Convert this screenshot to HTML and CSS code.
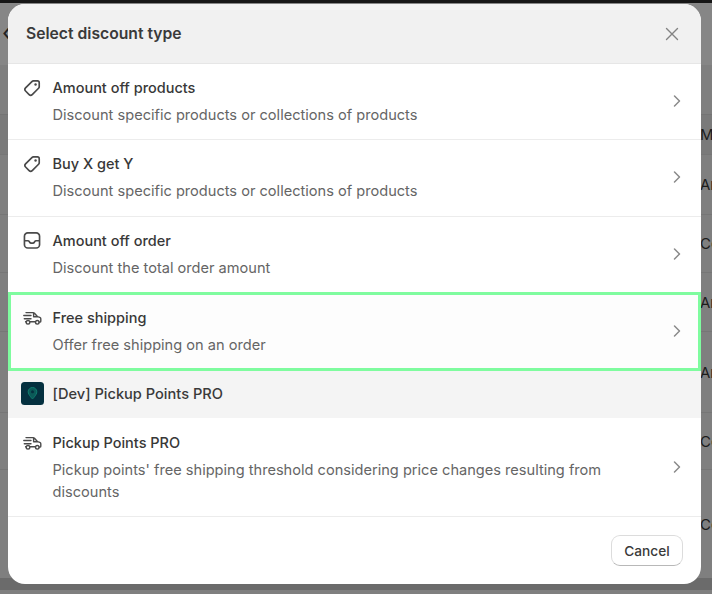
FILE: index.html
```html
<!DOCTYPE html>
<html lang="en">
<head>
<meta charset="utf-8">
<title>Select discount type</title>
<link rel="stylesheet" href="styles.css">
</head>
<body>
<svg class="defs" width="0" height="0" aria-hidden="true">
  <defs>
    <symbol id="tag" viewBox="0 0 18 18">
      <path d="M10.300 2.600h3.600a1.600 1.600 0 0 1 1.600 1.600v3.600a2 2 0 0 1-.6 1.400l-5.700 5.700a2 2 0 0 1-2.800 0l-3.200-3.200a2 2 0 0 1 0-2.800l5.700-5.700a2 2 0 0 1 1.400-.6Z" fill="none" stroke="currentColor" stroke-width="1.500" stroke-linejoin="round"/>
      <circle cx="12.200" cy="5.800" r="1.100" fill="currentColor"/>
    </symbol>
    <symbol id="inbox" viewBox="0 0 18 18">
      <path d="M5.200 1.700h7.600a3 3 0 0 1 3 3v7.600a3 3 0 0 1-3 3H5.200a3 3 0 0 1-3-3V4.700a3 3 0 0 1 3-3Z" fill="none" stroke="currentColor" stroke-width="1.500"/>
      <path d="M2.400 8.800h2.900c.6 0 1 .3 1.300.8l.3.500c.3.500.8.800 1.300.800h1.600c.5 0 1-.3 1.300-.8l.3-.5c.3-.5.7-.8 1.300-.8h2.900" fill="none" stroke="currentColor" stroke-width="1.500"/>
    </symbol>
    <symbol id="truck" viewBox="0 0 20 18">
      <path d="M4 3.600h7.200c.5 0 .9.200 1.300.6l3.100 3.500 2.200.7c.6.200 1 .7 1 1.300v2.500c0 .5-.4.900-.9.900h-.8M8 12.800h5.200M3.600 12.800h.3M1.800 6.500h7.200M2.300 9.700h6.700M11.600 4v3.700h4.200" fill="none" stroke="currentColor" stroke-width="1.400" stroke-linecap="round" stroke-linejoin="round"/>
      <circle cx="6" cy="13.300" r="1.800" fill="none" stroke="currentColor" stroke-width="1.400"/>
      <circle cx="15.300" cy="13.300" r="1.800" fill="none" stroke="currentColor" stroke-width="1.400"/>
    </symbol>
    <symbol id="chevron" viewBox="0 0 10 14">
      <path d="M2.500 2 7.500 7l-5 5" fill="none" stroke="currentColor" stroke-width="1.500" stroke-linecap="round" stroke-linejoin="round"/>
    </symbol>
  </defs>
</svg>

<div class="page">
  <div class="topbar"></div>
  <div class="bg-head"><span class="back-glyph">‹</span></div>
  <div class="bg-gap"></div>
  <div class="bg-row h-m">M</div>
  <div class="bg-row h-a1">Ar</div>
  <div class="bg-row h-c1">Co</div>
  <div class="bg-row h-a2">Ar</div>
  <div class="bg-row h-a3">Ar</div>
  <div class="bg-row h-c2">Co</div>
  <div class="bg-row h-c3">Co</div>
  <div class="bg-band"></div>
</div>

<section class="modal">
  <header class="modal-head">
    <h1 class="modal-title">Select discount type</h1>
    <svg class="close" width="16" height="16" viewBox="0 0 16 16"><path d="M2.500 2.500l11 11M13.500 2.500l-11 11" stroke="currentColor" stroke-width="1.400" stroke-linecap="round"/></svg>
  </header>

  <div class="option opt-1">
    <svg class="ico"><use href="#tag"/></svg>
    <div class="opt-text">
      <div class="opt-title">Amount off products</div>
      <div class="opt-sub">Discount specific products or collections of products</div>
    </div>
    <svg class="chev"><use href="#chevron"/></svg>
  </div>
  <div class="option opt-2">
    <svg class="ico"><use href="#tag"/></svg>
    <div class="opt-text">
      <div class="opt-title">Buy X get Y</div>
      <div class="opt-sub">Discount specific products or collections of products</div>
    </div>
    <svg class="chev"><use href="#chevron"/></svg>
  </div>
  <div class="option opt-3">
    <svg class="ico"><use href="#inbox"/></svg>
    <div class="opt-text">
      <div class="opt-title">Amount off order</div>
      <div class="opt-sub">Discount the total order amount</div>
    </div>
    <svg class="chev"><use href="#chevron"/></svg>
  </div>
  <div class="option option-hl">
    <svg class="ico"><use href="#truck"/></svg>
    <div class="opt-text">
      <div class="opt-title">Free shipping</div>
      <div class="opt-sub">Offer free shipping on an order</div>
    </div>
    <svg class="chev"><use href="#chevron"/></svg>
  </div>

  <div class="group-head">
    <svg class="app-logo" viewBox="0 0 23 23">
      <rect width="23" height="23" rx="3.500" fill="#04303f"/>
      <path d="M11.500 5.500a4.300 4.300 0 0 0-4.300 4.300c0 3 4.300 7.200 4.300 7.200s4.300-4.200 4.300-7.200a4.300 4.300 0 0 0-4.300-4.300Z" fill="#0b5a58" stroke="#0f7f70" stroke-width="1"/>
      <circle cx="11.500" cy="9.800" r="1.500" fill="#04303f"/>
    </svg>
    <span class="group-title">[Dev] Pickup Points PRO</span>
  </div>

  <div class="option opt-app">
    <svg class="ico"><use href="#truck"/></svg>
    <div class="opt-text">
      <div class="opt-title">Pickup Points PRO</div>
      <div class="opt-sub">Pickup points' free shipping threshold considering price changes resulting from discounts</div>
    </div>
    <svg class="chev"><use href="#chevron"/></svg>
  </div>

  <footer class="modal-foot">
    <button class="cancel" type="button">Cancel</button>
  </footer>
</section>
</body>
</html>
```
FILE: styles.css
```css
* { box-sizing: border-box; }
html, body { margin: 0; padding: 0; }
body {
  width: 712px;
  height: 594px;
  overflow: hidden;
  background: #7f7f7f;
  font-family: Inter, "Liberation Sans", sans-serif;
  position: relative;
}
.defs { position: absolute; }

.page { height: 594px; display: flex; flex-direction: column; overflow: hidden; }
.topbar { height: 3px; flex: none; background: #161616; }
.bg-head { height: 62px; flex: none; background: #868686; padding-left: 2px; font-size: 24px; line-height: 60px; color: #222; }
.back-glyph { display: block; }
.bg-gap { height: 50px; flex: none; border-bottom: 1px solid #747474; }
.bg-row {
  flex: none;
  display: flex;
  align-items: center;
  padding-left: 700px;
  font-size: 15px;
  color: #1c1c1c;
  white-space: nowrap;
  border-bottom: 1px solid #767676;
}
.h-m { height: 40px; background: #7a7a7a; }
.h-a1 { height: 60px; }
.h-c1 { height: 58px; }
.h-a2 { height: 59px; }
.h-a3 { height: 81px; }
.h-c2 { height: 57px; }
.h-c3 { height: 108px; border-bottom: 0; }
.bg-band { height: 12px; flex: none; background: #6b6b6b; }

.modal {
  position: absolute;
  left: 8px; top: 4px;
  width: 693px; height: 580px;
  background: #fff;
  border-radius: 17px;
  overflow: hidden;
  display: flex;
  flex-direction: column;
  color: #303030;
}
.modal-head {
  height: 60px;
  flex: none;
  background: #f1f1f1;
  border-bottom: 1px solid #e6e6e6;
  display: flex;
  align-items: center;
  justify-content: space-between;
  padding: 0 21px 0 18px;
}
.modal-title { margin: 0; font-size: 15.700px; font-weight: 600; color: #3a3a3a; }
.close { color: #838383; }

.option {
  display: flex;
  align-items: flex-start;
  padding: 0 19.500px 0 14px;
  border-bottom: 1px solid #ececec;
  flex: none;
}
.opt-1 { height: 76px; --top: 14px; }
.opt-2 { height: 77px; --top: 14px; }
.opt-3 { height: 76px; --top: 14px; }
.option-hl {
  height: 79px;
  --top: 13px;
  border: 3px solid #7ffc9f;
  padding: 0 16.500px 0 11px;
  background: #fdfdfd;
  margin-top: -1px;
}
.opt-app { height: 99px; --top: 15px; }
.opt-text { flex: 1; margin-left: 10.500px; padding-top: var(--top); }
.opt-title { font-size: 14.500px; font-weight: 500; line-height: 20px; color: #383838; }
.opt-sub { font-size: 14.600px; line-height: 22px; color: #656565; margin-top: 6px; width: 570px; }
.opt-app .opt-sub { margin-top: 6px; }
.ico { width: 20px; height: 20px; color: #4a4a4a; flex: none; margin-top: var(--top); }
.chev { width: 10px; height: 14px; color: #8a8a8a; flex: none; align-self: center; margin-bottom: 2px; }
.opt-app .chev { margin-bottom: 0; }

.group-head {
  height: 47px;
  flex: none;
  background: #f4f4f4;
  display: flex;
  align-items: center;
  padding-left: 13px;
  padding-bottom: 2px;
  gap: 8.500px;
}
.app-logo { width: 23px; height: 23px; flex: none; }
.group-title { font-size: 14.600px; font-weight: 500; color: #3a3a3a; }

.modal-foot {
  flex: 1;
  display: flex;
  justify-content: flex-end;
  align-items: center;
  padding: 0 18px 0 0;
}
.cancel {
  width: 72px; height: 31px;
  background: #fff;
  border: 1px solid #dcdcdc;
  border-bottom-color: #b8b8b8;
  border-radius: 9px;
  font: 500 13.700px Inter, "Liberation Sans", sans-serif;
  color: #3a3a3a;
  padding: 0;
}
```
